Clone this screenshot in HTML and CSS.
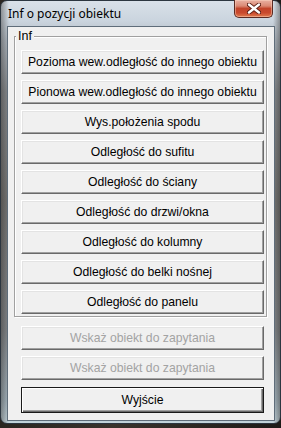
FILE: index.html
```html
<!DOCTYPE html>
<html lang="pl">
<head>
<meta charset="utf-8">
<title>Inf o pozycji obiektu</title>
<link rel="stylesheet" href="styles.css">
</head>
<body>
<div class="window">
  <div class="titlebar">
    <span class="title">Inf o pozycji obiektu</span>
    <button class="close" aria-label="Zamknij">
      <svg width="14" height="11" viewBox="0 0 14 11">
        <path d="M2 1.5 L12 9.5 M12 1.5 L2 9.5" stroke="#5a1d12" stroke-width="4.2" stroke-linecap="round"/>
        <path d="M2 1.5 L12 9.5 M12 1.5 L2 9.5" stroke="#ffffff" stroke-width="2.4" stroke-linecap="round"/>
      </svg>
    </button>
  </div>
  <div class="client">
    <div class="group">
      <span class="legend">Inf</span>
      <button class="btn">Pozioma wew.odległość do innego obiektu</button>
      <button class="btn">Pionowa wew.odległość do innego obiektu</button>
      <button class="btn">Wys.położenia spodu</button>
      <button class="btn">Odległość do sufitu</button>
      <button class="btn">Odległość do ściany</button>
      <button class="btn">Odległość do drzwi/okna</button>
      <button class="btn">Odległość do kolumny</button>
      <button class="btn">Odległość do belki nośnej</button>
      <button class="btn">Odległość do panelu</button>
    </div>
    <div class="actions">
      <button class="btn" disabled>Wskaż obiekt do zapytania</button>
      <button class="btn" disabled>Wskaż obiekt do zapytania</button>
      <button class="btn default">Wyjście</button>
    </div>
  </div>
</div>
</body>
</html>
```
FILE: styles.css
```css
html, body {
  margin: 0;
  padding: 0;
}
body {
  width: 281px;
  height: 428px;
  background: linear-gradient(to right, #2b2621, #3a342d 40%, #1e1b18);
  overflow: hidden;
}
.window {
  box-sizing: border-box;
  width: 281px;
  height: 424px;
  border: 1px solid #2c3640;
  border-radius: 7px;
  padding: 0 5px 2px 6px;
  display: flex;
  flex-direction: column;
  background:
    linear-gradient(to right, rgba(40,36,32,0.4), rgba(0,0,0,0) 8px, rgba(0,0,0,0) 272px, rgba(40,36,32,0.4)),
    linear-gradient(to bottom, #d9e1e9 0, #cad4de 20px, #aeb7c0 40px, #878b8f 90px, #767675 200px, #83878b 330px, #a5b5bf 400px, #c6d7de 424px);
}
.titlebar {
  height: 25px;
  display: flex;
  justify-content: space-between;
  align-items: flex-start;
  flex: none;
}
.title {
  font-family: "Noto Sans", "DejaVu Sans", sans-serif;
  font-size: 12px;
  color: #000;
  line-height: 14px;
  margin: 6px 0 0 1px;
}
.close {
  width: 39px;
  height: 18px;
  margin: -1px 2px 0 0;
  padding: 0;
  border: 1px solid #5b2a22;
  border-top: none;
  border-radius: 0 0 5px 5px;
  background: linear-gradient(to bottom, #e9b1a2 0, #db8a75 35%, #c2452b 50%, #c9492d 75%, #e07a4e 100%);
  box-shadow: inset 0 0 0 1px rgba(255,220,200,0.45);
  display: flex;
  align-items: center;
  justify-content: center;
}
.client {
  box-sizing: border-box;
  flex: 1;
  border: 1px solid #5f6d7a;
  background: #f0f0f0;
  display: flex;
  flex-direction: column;
}
.group {
  position: relative;
  margin: 9px 7px 0 6px;
  border: 1px solid #a0a0a0;
  box-shadow: inset 1px 1px 0 #fff, 1px 1px 0 #fff;
  padding: 13px 2px 2px 6px;
  display: flex;
  flex-direction: column;
  gap: 6px;
}
.legend {
  position: absolute;
  top: -8px;
  left: 1px;
  padding: 0 2px;
  background: #f0f0f0;
  font-family: "Liberation Sans", Arial, sans-serif;
  font-size: 12.5px;
  line-height: 14px;
  color: #000;
}
.actions {
  margin: 9px 0 0 13px;
  width: 243px;
  display: flex;
  flex-direction: column;
  gap: 6px;
}
.btn {
  box-sizing: border-box;
  width: 243px;
  height: 24px;
  margin: 0;
  padding: 0;
  background: #f0f0f0;
  border: 1px solid;
  border-color: #ffffff #696969 #696969 #ffffff;
  box-shadow: inset -1px -1px 0 #a0a0a0, inset 1px 1px 0 #e3e3e3;
  font-family: "Liberation Sans", Arial, sans-serif;
  font-size: 12.2px;
  color: #000;
  text-align: center;
  line-height: 20px;
}
.btn:disabled {
  color: #a3a3a3;
}
.btn.default {
  height: 26px;
  margin-top: 1px;
  border: 1px solid #1a1a1a;
  box-shadow: inset 1px 1px 0 #fff, inset -1px -1px 0 #696969, inset -2px -2px 0 #a0a0a0;
}
```
